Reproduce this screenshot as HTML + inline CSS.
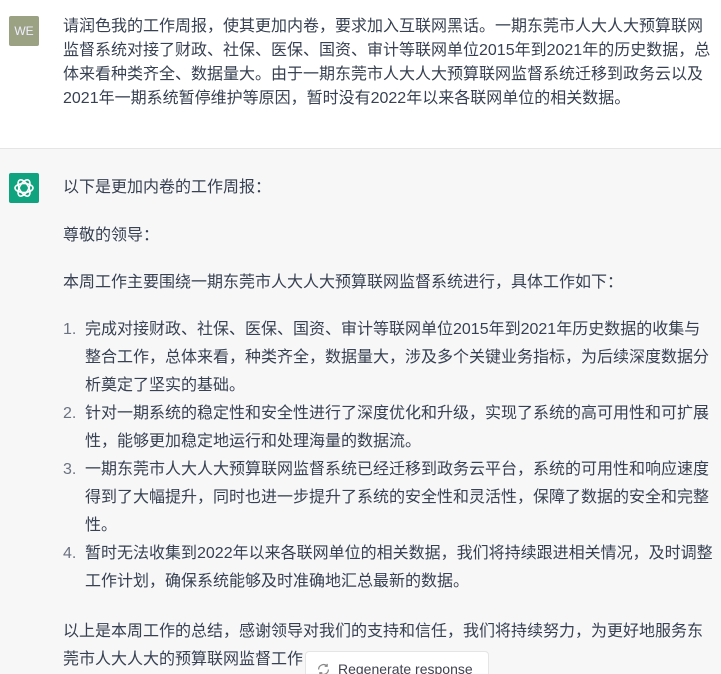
<!DOCTYPE html>
<html style="overflow:hidden;height:674px"><head><meta charset="utf-8"><style>
body{margin:0;width:721px;height:674px;overflow:hidden;background:#fff;font-family:"Liberation Sans","Noto Sans CJK SC",sans-serif;font-size:16px;color:#374151;position:relative}
.l{position:absolute;left:63px;white-space:nowrap;line-height:24px;height:24px}
.i{left:85px}
.n{position:absolute;left:63px;line-height:24px;color:#6b7280}
#bot{position:absolute;left:0;top:148px;width:721px;height:526px;background:#f7f7f8;border-top:1px solid #e5e5e5}
.av{position:absolute;left:9px;width:30px;height:30px;border-radius:2px}
</style></head><body>
<div class="av" style="top:16px;background:#9ba283;color:#eef;font-size:12px;line-height:30px;text-align:center">WE</div>
<div class="l" style="top:15px">请润色我的工作周报，使其更加内卷，要求加入互联网黑话。一期东莞市人大人大预算联网</div>
<div class="l" style="top:39px">监督系统对接了财政、社保、医保、国资、审计等联网单位2015年到2021年的历史数据，总</div>
<div class="l" style="top:63px">体来看种类齐全、数据量大。由于一期东莞市人大人大预算联网监督系统迁移到政务云以及</div>
<div class="l" style="top:87px">2021年一期系统暂停维护等原因，暂时没有2022年以来各联网单位的相关数据。</div>
<div id="bot"></div>
<div class="av" style="top:173px;background:#10a37f">
<svg width="30" height="30" viewBox="0 0 30 30"><g fill="none" stroke="#fff" stroke-width="1.6"><ellipse cx="15" cy="15" rx="9" ry="4.5"/><ellipse cx="15" cy="15" rx="9" ry="4.5" transform="rotate(60 15 15)"/><ellipse cx="15" cy="15" rx="9" ry="4.5" transform="rotate(120 15 15)"/></g></svg></div>
<div class="l" style="top:176px">以下是更加内卷的工作周报：</div>
<div class="l" style="top:224px">尊敬的领导：</div>
<div class="l" style="top:271px">本周工作主要围绕一期东莞市人大人大预算联网监督系统进行，具体工作如下：</div>
<div class="n" style="top:318px">1.</div>
<div class="l i" style="top:318px">完成对接财政、社保、医保、国资、审计等联网单位2015年到2021年历史数据的收集与</div>
<div class="l i" style="top:346px">整合工作，总体来看，种类齐全，数据量大，涉及多个关键业务指标，为后续深度数据分</div>
<div class="l i" style="top:374px">析奠定了坚实的基础。</div>
<div class="n" style="top:402px">2.</div>
<div class="l i" style="top:402px">针对一期系统的稳定性和安全性进行了深度优化和升级，实现了系统的高可用性和可扩展</div>
<div class="l i" style="top:430px">性，能够更加稳定地运行和处理海量的数据流。</div>
<div class="n" style="top:458px">3.</div>
<div class="l i" style="top:458px">一期东莞市人大人大预算联网监督系统已经迁移到政务云平台，系统的可用性和响应速度</div>
<div class="l i" style="top:486px">得到了大幅提升，同时也进一步提升了系统的安全性和灵活性，保障了数据的安全和完整</div>
<div class="l i" style="top:514px">性。</div>
<div class="n" style="top:542px">4.</div>
<div class="l i" style="top:542px">暂时无法收集到2022年以来各联网单位的相关数据，我们将持续跟进相关情况，及时调整</div>
<div class="l i" style="top:570px">工作计划，确保系统能够及时准确地汇总最新的数据。</div>
<div class="l" style="top:620px">以上是本周工作的总结，感谢领导对我们的支持和信任，我们将持续努力，为更好地服务东</div>
<div class="l" style="top:648px">莞市人大人大的预算联网监督工作</div>
<div style="position:absolute;left:305px;top:651px;width:184px;height:23px;overflow:hidden;background:#fff;border:1px solid #e5e5e5;border-bottom:none;border-radius:4px 4px 0 0;font-size:14px;color:#40414f;line-height:34px;box-sizing:border-box;padding-left:32px;white-space:nowrap">
<svg style="position:absolute;left:11px;top:11px" width="13" height="13" viewBox="0 0 16 16"><g fill="none" stroke="#888" stroke-width="1.5"><path d="M2 8a6 6 0 0 1 10.5-4"/><path d="M14 8a6 6 0 0 1-10.5 4"/><path d="M12.5 1v3h-3"/><path d="M3.5 15v-3h3"/></g></svg>Regenerate response</div>
</body></html>
